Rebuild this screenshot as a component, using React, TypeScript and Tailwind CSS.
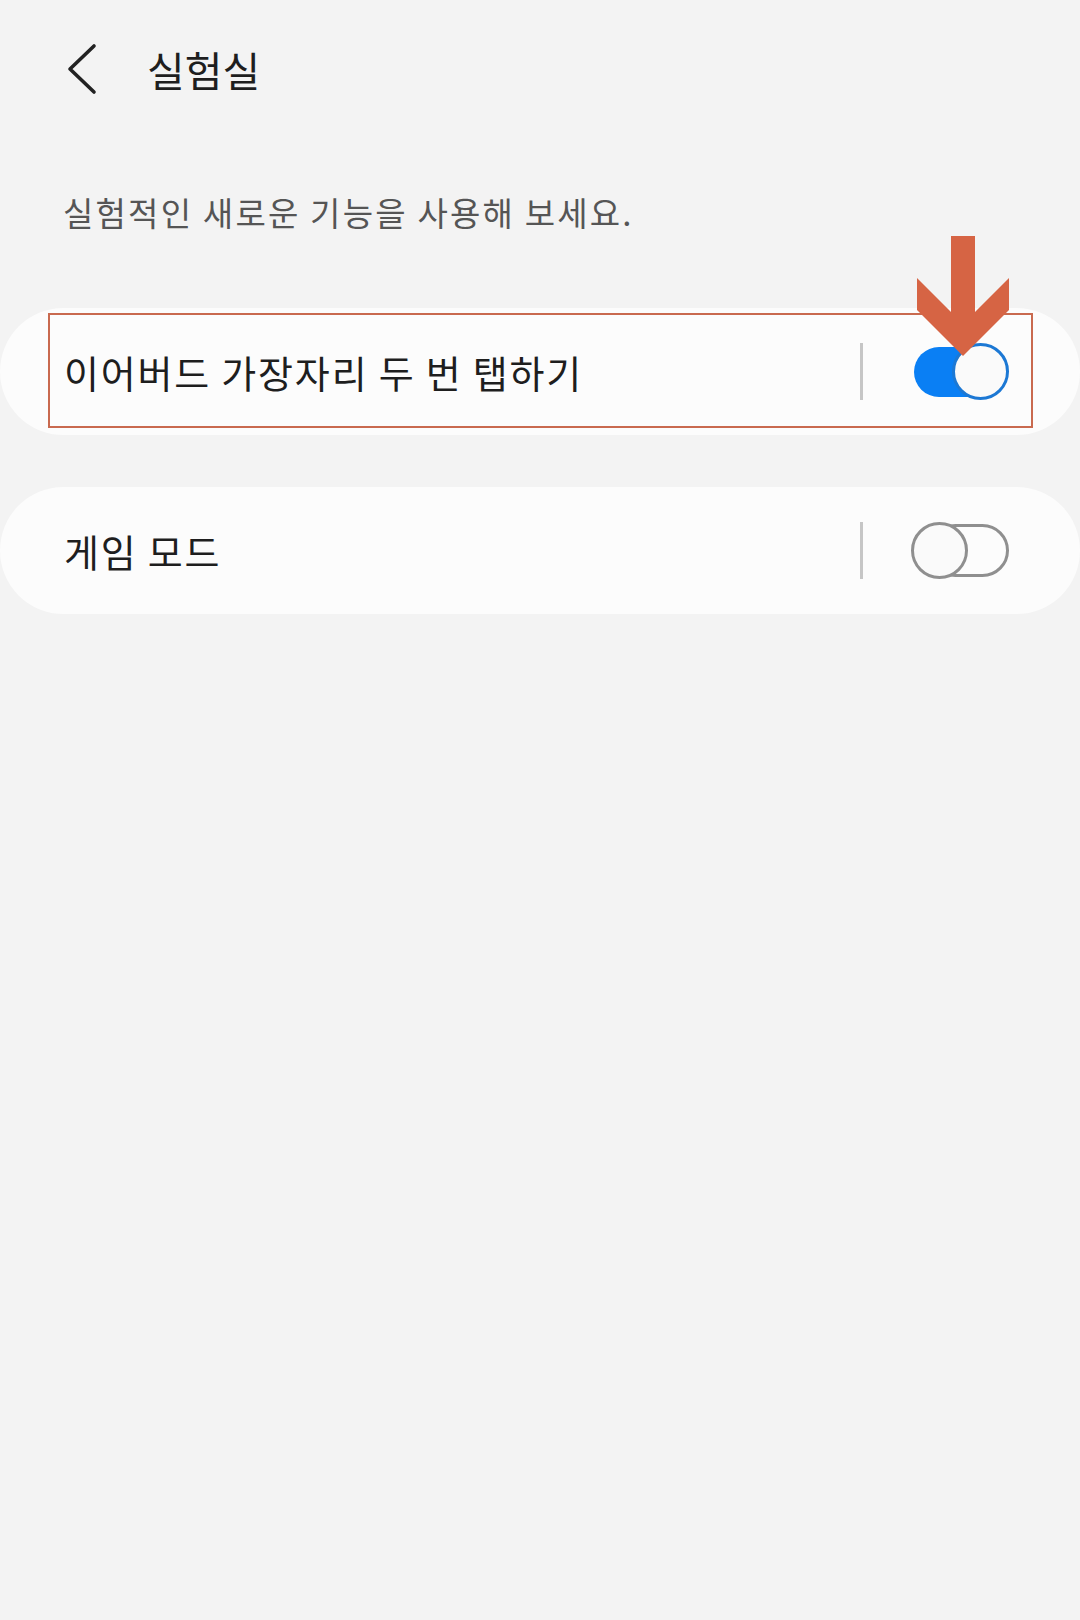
const font = {
  fontFamily: '"Noto Sans CJK KR", "Noto Sans", sans-serif',
};

function Toggle({ on }: { on: boolean }) {
  if (on) {
    return (
      <div className="relative h-[57px] w-[98px]">
        <div className="absolute left-[3px] top-[4px] h-[50px] w-[80px] rounded-full bg-[#0a7ff4]" />
        <div className="absolute right-0 top-0 h-[57px] w-[57px] rounded-full border-[3px] border-[#1c78d4] bg-[#fafafa]" />
      </div>
    );
  }
  return (
    <div className="relative h-[57px] w-[98px]">
      <div className="absolute right-0 top-[2px] h-[53px] w-[80px] rounded-full border-[3px] border-[#8f8f8f]" />
      <div className="absolute left-0 top-0 h-[57px] w-[57px] rounded-full border-[3px] border-[#8f8f8f] bg-[#fafafa]" />
    </div>
  );
}

function SettingRow({
  label,
  on,
  highlight,
}: {
  label: string;
  on: boolean;
  highlight?: boolean;
}) {
  return (
    <div className="relative flex h-[127px] w-full items-center rounded-full bg-[#fcfcfc] pl-[64px] pr-[71px]">
      <span className="flex-1 text-[38px] leading-none tracking-[1.8px] text-[#1e1e1e]">
        {label}
      </span>
      <div className="h-[57px] w-[3px] bg-[#c6c6c6]" />
      <div className="ml-[48px]">
        <Toggle on={on} />
      </div>
      {highlight ? (
        <>
          <div className="pointer-events-none absolute left-[48px] top-[5px] h-[115px] w-[985px] border-2 border-[#c96a4f]" />
          <svg
            className="pointer-events-none absolute left-[915px] top-[-73px]"
            width="96"
            height="122"
            viewBox="0 0 96 122"
          >
            <polygon
              points="36,1 60,1 60,77 94,43 94,75 48,121 2,75 2,43 36,77"
              fill="#d66444"
            />
          </svg>
        </>
      ) : null}
    </div>
  );
}

export default function App() {
  return (
    <div className="min-h-[1620px] w-[1080px] bg-[#f3f3f3]" style={font}>
      <header className="flex h-[138px] items-center pl-[67px]">
        <svg width="32" height="52" viewBox="0 0 32 52">
          <path
            d="M27 3 L3 26 L27 49"
            fill="none"
            stroke="#222"
            strokeWidth="3.6"
            strokeLinecap="round"
            strokeLinejoin="round"
          />
        </svg>
        <h1 className="ml-[48px] text-[41px] font-normal leading-none text-[#1e1e1e]">
          실험실
        </h1>
      </header>

      <p className="mt-[53px] h-[42px] pl-[63px] text-[33px] leading-[42px] tracking-[2.2px] text-[#555555]">
        실험적인 새로운 기능을 사용해 보세요.
      </p>

      <div className="mt-[75px] flex flex-col gap-[52px]">
        <SettingRow label="이어버드 가장자리 두 번 탭하기" on highlight />
        <SettingRow label="게임 모드" on={false} />
      </div>
    </div>
  );
}
